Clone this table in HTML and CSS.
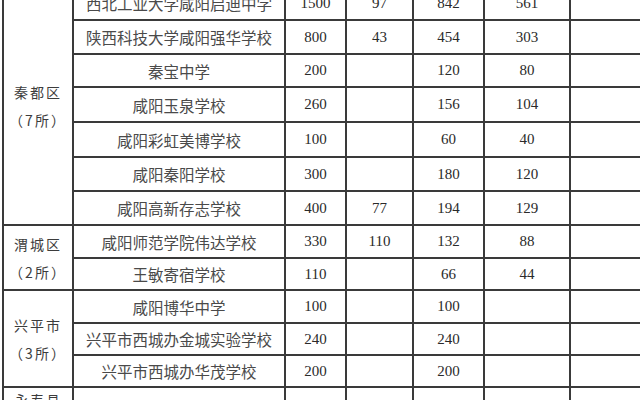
FILE: index.html
```html
<!DOCTYPE html>
<html lang="zh-CN">
<head>
<meta charset="utf-8">
<title>咸阳民办学校招生计划</title>
<link rel="stylesheet" href="styles.css">
</head>
<body>
<table class="plan">
  <colgroup>
    <col class="c-region"><col class="c-school"><col class="c-n1"><col class="c-n2"><col class="c-n3"><col class="c-n4"><col class="c-extra">
  </colgroup>
  <tbody>
    <tr class="h34">
      <td class="region" rowspan="7">秦都区<br>（7所）</td>
      <td class="school">西北工业大学咸阳启迪中学</td><td class="num">1500</td><td class="num">97</td><td class="num">842</td><td class="num">561</td><td></td>
    </tr>
    <tr class="h34">
      <td class="school">陕西科技大学咸阳强华学校</td><td class="num">800</td><td class="num">43</td><td class="num">454</td><td class="num">303</td><td></td>
    </tr>
    <tr class="h33">
      <td class="school">秦宝中学</td><td class="num">200</td><td class="num"></td><td class="num">120</td><td class="num">80</td><td></td>
    </tr>
    <tr class="h35">
      <td class="school">咸阳玉泉学校</td><td class="num">260</td><td class="num"></td><td class="num">156</td><td class="num">104</td><td></td>
    </tr>
    <tr class="h35">
      <td class="school">咸阳彩虹美博学校</td><td class="num">100</td><td class="num"></td><td class="num">60</td><td class="num">40</td><td></td>
    </tr>
    <tr class="h34">
      <td class="school">咸阳秦阳学校</td><td class="num">300</td><td class="num"></td><td class="num">180</td><td class="num">120</td><td></td>
    </tr>
    <tr class="h34">
      <td class="school">咸阳高新存志学校</td><td class="num">400</td><td class="num">77</td><td class="num">194</td><td class="num">129</td><td></td>
    </tr>
    <tr class="h33">
      <td class="region" rowspan="2">渭城区<br>（2所）</td>
      <td class="school">咸阳师范学院伟达学校</td><td class="num">330</td><td class="num">110</td><td class="num">132</td><td class="num">88</td><td></td>
    </tr>
    <tr class="h32">
      <td class="school">王敏寄宿学校</td><td class="num">110</td><td class="num"></td><td class="num">66</td><td class="num">44</td><td></td>
    </tr>
    <tr class="h33">
      <td class="region" rowspan="3">兴平市<br>（3所）</td>
      <td class="school">咸阳博华中学</td><td class="num">100</td><td class="num"></td><td class="num">100</td><td class="num"></td><td></td>
    </tr>
    <tr class="h32">
      <td class="school">兴平市西城办金城实验学校</td><td class="num">240</td><td class="num"></td><td class="num">240</td><td class="num"></td><td></td>
    </tr>
    <tr class="h32">
      <td class="school">兴平市西城办华茂学校</td><td class="num">200</td><td class="num"></td><td class="num">200</td><td class="num"></td><td></td>
    </tr>
    <tr class="h60">
      <td class="region region-top">永寿县</td>
      <td class="school"></td><td class="num"></td><td class="num"></td><td class="num"></td><td class="num"></td><td></td>
    </tr>
  </tbody>
</table>
</body>
</html>
```
FILE: styles.css
```css
html, body {
  margin: 0;
  padding: 0;
  background: #ffffff;
  overflow: hidden;
  width: 640px;
  height: 400px;
}
.plan {
  border-collapse: collapse;
  table-layout: fixed;
  width: 707px;
  margin: -15px 0 0 2px;
  font-family: "Noto Sans CJK SC", "Liberation Sans", sans-serif;
}
.plan td {
  border: 2px solid #3a3a3a;
  padding: 0;
  text-align: center;
  vertical-align: middle;
  white-space: nowrap;
  overflow: hidden;
}
.c-region { width: 70px; }
.c-school { width: 212px; }
.c-n1 { width: 61px; }
.c-n2 { width: 67px; }
.c-n3 { width: 71px; }
.c-n4 { width: 86px; }
.c-extra { width: 140px; }

.h32 { height: 32px; }
.h33 { height: 33px; }
.h34 { height: 34px; }
.h35 { height: 35px; }
.h60 { height: 60px; }

.school {
  font-size: 15.5px;
  color: #4a4a4a;
  line-height: 20px;
}
.num {
  font-family: "Liberation Serif", "Noto Sans CJK SC", serif;
  font-size: 15px;
  color: #2a2a2a;
}
.region {
  font-size: 14px;
  line-height: 28px;
  color: #3c3c3c;
  font-weight: 400;
  letter-spacing: 2px;
}
.plan td.region-top {
  vertical-align: top;
  line-height: 14px;
  padding-top: 5px;
}
```
